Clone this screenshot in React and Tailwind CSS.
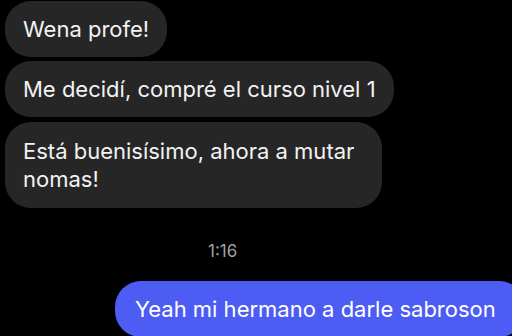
const Bubble = ({ children, className = '' }) => (
  <div className={`self-start bg-[#262626] text-[#f2f2f2] rounded-[26px] px-[18px] py-[14px] text-[22px] leading-[28px] ${className}`}>
    {children}
  </div>
);

export default function App() {
  return (
    <div className="w-[512px] h-[336px] overflow-hidden bg-black flex flex-col pt-[1px] pl-[5px] font-['Inter','Noto_Sans',sans-serif]">
      <Bubble className="h-[57px]">Wena profe!</Bubble>
      <Bubble className="mt-[4px] h-[56px]">Me decidí, compré el curso nivel 1</Bubble>
      <Bubble className="mt-[5px] w-[377px] h-[87px] py-[15px] rounded-[24px]">
        Está buenisísimo, ahora a mutar nomas!
      </Bubble>
      <div className="mt-[33px] pl-[203px] text-[17px] leading-[20px] text-[#a0a0a0]">1:16</div>
      <div className="mt-[20px] ml-[110px] w-[410px] bg-[#4d5cf2] text-white rounded-[26px] px-[20px] py-[14px] text-[22px] leading-[28px] whitespace-nowrap">
        Yeah mi hermano a darle sabroson
      </div>
    </div>
  );
}
